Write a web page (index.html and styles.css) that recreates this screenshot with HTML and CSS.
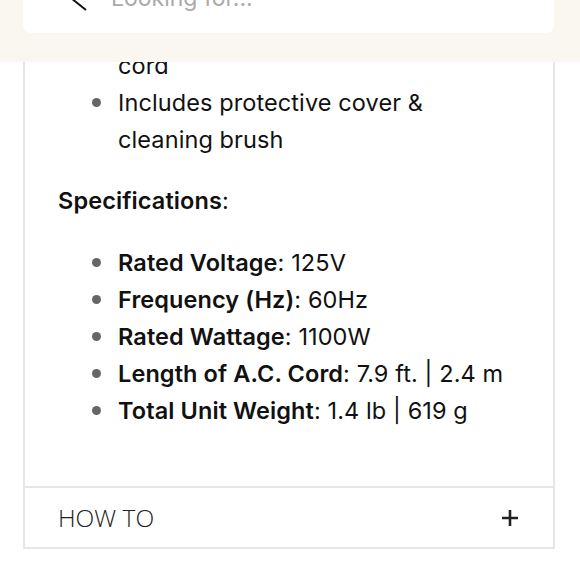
FILE: index.html
```html
<!DOCTYPE html>
<html lang="en">

<head>
    <meta charset="UTF-8">
    <meta name="viewport" content="width=device-width, initial-scale=1.0">
    <title>Product Details</title>
    <link rel="stylesheet" href="styles.css">
</head>

<body>

    <!-- Search header (stays on top while scrolling) -->
    <header class="topbar">
        <div class="search">
            <svg class="back" width="20" height="28" viewBox="0 0 20 28">
                <path d="M17 2 L2 14 L17 26" fill="none" stroke="#111" stroke-width="2"/>
            </svg>
            <span class="placeholder">Looking for...</span>
        </div>
    </header>

    <div class="panel">
        <div class="panel-body">
            <ul class="list">
                <li><span>Tangle-free swivel power<br>cord</span></li>
                <li><span>Includes protective cover &amp; cleaning brush</span></li>
            </ul>

            <p class="heading"><strong>Specifications</strong>:</p>

            <ul class="list">
                <li><span><strong>Rated Voltage</strong>: 125V</span></li>
                <li><span><strong>Frequency (Hz)</strong>: 60Hz</span></li>
                <li><span><strong>Rated Wattage</strong>: 1100W</span></li>
                <li><span><strong>Length of A.C. Cord</strong>: 7.9 ft. | 2.4 m</span></li>
                <li><span><strong>Total Unit Weight</strong>: 1.4 lb | 619 g</span></li>
            </ul>
        </div>

        <div class="accordion">
            <span>HOW TO</span>
            <svg class="plus" width="18" height="18" viewBox="0 0 18 18">
                <path d="M9 1 V17 M1 9 H17" stroke="#222" stroke-width="2.6"/>
            </svg>
        </div>
    </div>

</body>

</html>
```

FILE: styles.css
```css
body {
    margin: 0;
    background: #fff;
    font-family: Inter, "Noto Sans", sans-serif;
    color: #111;
}

.topbar {
    position: fixed;
    top: 0;
    left: 0;
    right: 0;
    height: 62px;
    background: #faf7f1;
    z-index: 2;
}

.search {
    display: flex;
    align-items: center;
    gap: 22px;
    height: 70px;
    margin: -37px 26px 0 23px;
    padding-left: 46px;
    background: #fff;
    border-radius: 8px;
}

.placeholder {
    font-size: 23px;
    color: #aaa;
}

.panel {
    margin: -27px 25px 0 23px;
    border: 2px solid #e6e6e6;
    border-top: none;
}

.panel-body {
    padding: 37px 44px 57px 33px;
    font-size: 23.5px;
    line-height: 37px;
    letter-spacing: 0.1px;
}

.list {
    list-style: none;
    margin: 0;
    padding-left: 34px;
}

.list li {
    display: flex;
    gap: 17px;
}

.list li::before {
    content: "";
    flex: none;
    width: 9px;
    height: 9px;
    margin-top: 14px;
    border-radius: 50%;
    background: #666;
}

.heading {
    margin: 24px 0 25px;
}

strong {
    font-weight: 600;
}

.accordion {
    display: flex;
    align-items: center;
    justify-content: space-between;
    height: 59px;
    padding: 0 34px 0 33px;
    border-top: 2px solid #e6e6e6;
    font-family: "Open Sans", "Liberation Sans", sans-serif;
    font-weight: 300;
    font-size: 24.5px;
    color: #222;
}
```
